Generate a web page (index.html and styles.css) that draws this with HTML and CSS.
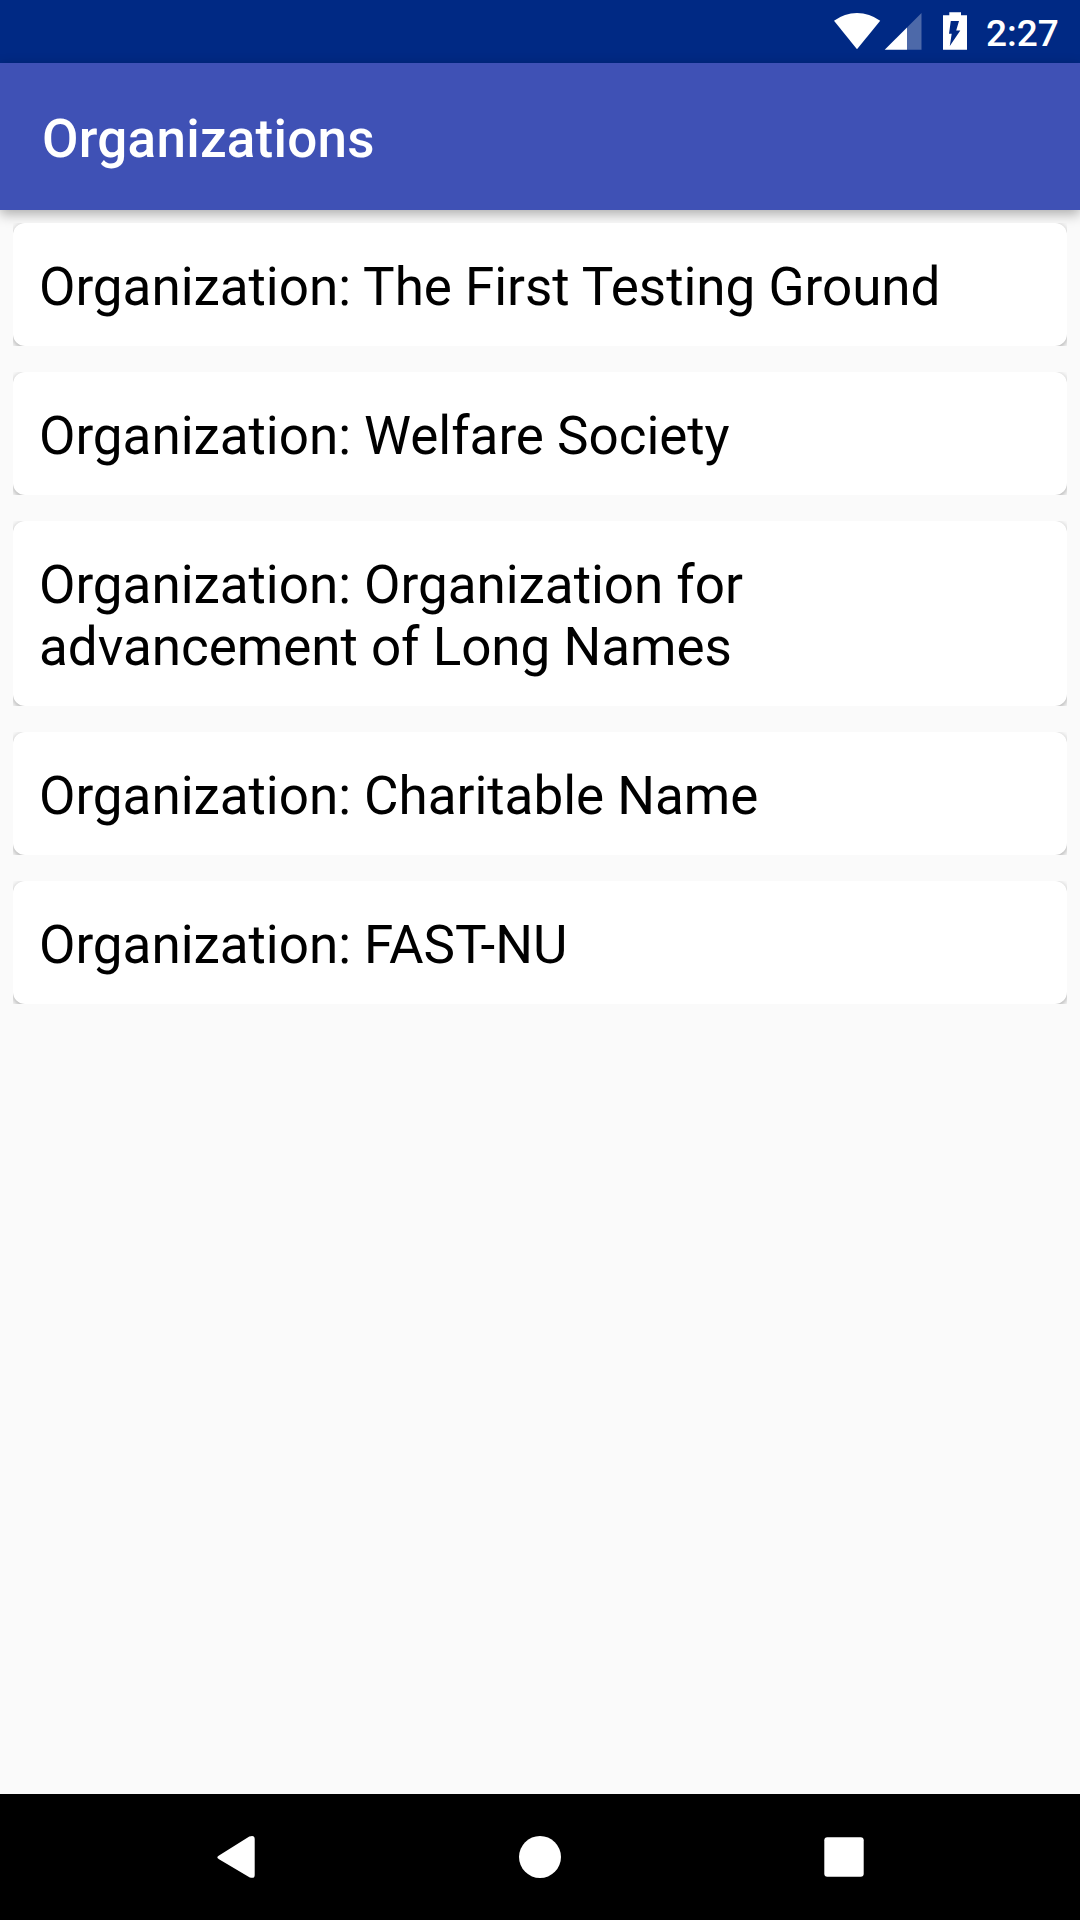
FILE: index.html
```html
<!DOCTYPE html>
<html lang="en">
<head>
<meta charset="utf-8">
<title>Organizations</title>
<link rel="stylesheet" href="styles.css">
</head>
<body>
<div class="screen">
  <div class="status-bar">
    <svg class="status-icons" width="140" height="63" viewBox="830 0 140 63" fill="#fff">
      <path d="M834 20.800Q844.500 13 857 13T880.200 20.800L857 49.300Z"/>
      <path fill-opacity=".3" d="M907 27.500L921.500 13V49.700H907Z"/>
      <path d="M884.700 49.700L907 27.400V49.700Z"/>
      <path fill-rule="evenodd" d="M949.300 12.300H961V15.300H967V49.700H943V15.300H949.300ZM950.800 21H959L956.200 30.500H960.300L949.800 46L951.700 33.700H949Z"/>
    </svg>
    <span class="clock">2:27</span>
  </div>
  <header class="app-bar"><h1 class="title">Organizations</h1></header>
  <main class="list">
    <div class="card"><div class="card-surface">Organization: The First Testing Ground</div></div>
    <div class="card"><div class="card-surface">Organization: Welfare Society</div></div>
    <div class="card"><div class="card-surface">Organization: Organization for<br>advancement of Long Names</div></div>
    <div class="card"><div class="card-surface">Organization: Charitable Name</div></div>
    <div class="card"><div class="card-surface">Organization: FAST-NU</div></div>
  </main>
  <nav class="nav-bar">
    <svg class="nav-icon" width="44" height="44" viewBox="0 0 44 44"><path d="M5 20.400L35.300 1.600Q40.700 -.2 40.700 4V40Q40.700 44 35.800 42.400L5 24.300Q1.600 22.300 5 20.400Z" fill="#fff"/></svg>
    <svg class="nav-icon" width="44" height="44" viewBox="0 0 44 44"><circle cx="22" cy="22" r="21" fill="#fff"/></svg>
    <svg class="nav-icon" width="44" height="44" viewBox="0 0 44 44"><rect x="2.300" y="2.300" width="39.400" height="39.400" rx="3" fill="#fff"/></svg>
  </nav>
</div>
</body>
</html>
```
FILE: styles.css
```css
* {
  box-sizing: border-box;
}

body {
  margin: 0;
  font-family: Roboto, sans-serif;
}

.screen {
  display: flex;
  flex-direction: column;
  width: 1080px;
  height: 1920px;
  overflow: hidden;
  background: #fafafa;
}

.status-bar {
  display: flex;
  justify-content: flex-end;
  align-items: center;
  height: 63px;
  padding-right: 20px;
  background: #002984;
  color: #fff;
}

.status-icons {
  flex: none;
  margin-right: 16px;
}

.clock {
  width: 74px;
  padding-top: 3px;
  font-size: 37px;
  font-weight: 500;
  line-height: 43px;
  white-space: nowrap;
}

.app-bar {
  display: flex;
  align-items: center;
  height: 147px;
  padding-left: 42px;
  background: #3f51b5;
  color: #fff;
  box-shadow: 0 4px 12px rgba(0, 0, 0, .32);
}

.title {
  margin: 0;
  padding-top: 4px;
  font-size: 53px;
  font-weight: 500;
  letter-spacing: .25px;
  line-height: 62px;
}

.list {
  display: flex;
  flex: 1;
  flex-direction: column;
  gap: 26px;
  padding: 13px;
}

.card {
  overflow: hidden;
}

.card-surface {
  padding: 33px 26px 28px;
  border-radius: 12px;
  background: #fff;
  box-shadow: 0 2px 6px rgba(0, 0, 0, .35);
  color: #000;
  font-size: 53px;
  letter-spacing: -.03px;
  line-height: 62px;
}

.nav-bar {
  display: flex;
  justify-content: center;
  align-items: center;
  gap: 260px;
  height: 126px;
  background: #000;
}
```
